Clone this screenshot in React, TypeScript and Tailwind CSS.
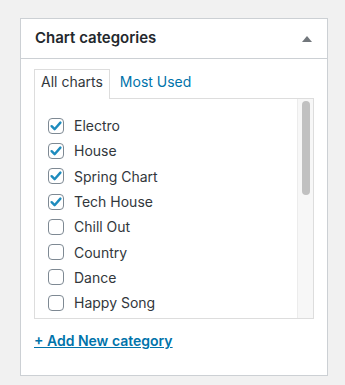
import React from 'react';

const categories = [
  { name: 'Electro', checked: true },
  { name: 'House', checked: true },
  { name: 'Spring Chart', checked: true },
  { name: 'Tech House', checked: true },
  { name: 'Chill Out', checked: false },
  { name: 'Country', checked: false },
  { name: 'Dance', checked: false },
  { name: 'Happy Song', checked: false },
];

function CheckBox({ checked }: { checked: boolean }) {
  return (
    <span className="w-4 h-4 shrink-0 rounded-[4px] border border-[#7e8993] bg-white flex items-center justify-center">
      {checked && (
        <svg width="14" height="14" viewBox="0 0 14 14">
          <path d="M2.6 7.2 L5.6 10.2 L11.4 3.6" fill="none" stroke="#1e8cbe" strokeWidth="2.4" strokeLinecap="round" strokeLinejoin="round" />
        </svg>
      )}
    </span>
  );
}

export default function App() {
  return (
    <div className="min-h-screen bg-[#f1f1f1] pt-[18px] pl-5" style={{ fontFamily: 'Inter, "Noto Sans", sans-serif' }}>
      <div className="w-[308px] h-[358px] border border-[#ccd0d4] bg-white">
        {/* Header */}
        <div className="h-[40px] border-b border-[#ccd0d4] flex items-center justify-between pl-[14px] pr-[15px]">
          <h2 className="text-[15px] font-semibold text-[#23282d]">Chart categories</h2>
          <svg width="10" height="6" viewBox="0 0 10 6">
            <path d="M0 6 L5 0 L10 6 Z" fill="#72777c" />
          </svg>
        </div>

        {/* Body */}
        <div className="pl-[13px] pr-[13px] pt-[10px]">
          <div className="flex items-end h-[29px] text-[14px] leading-[20px]">
            <div className="h-[30px] px-[6px] pt-[2px] border border-b-0 border-[#dddddd] bg-white text-[#32373c] relative top-[1px] z-10">
              All charts
            </div>
            <div className="pl-[10px] h-[29px] pt-[3px] text-[#0073aa]">Most Used</div>
          </div>

          <div className="h-[221px] border border-[#dddddd] bg-white flex overflow-hidden">
            <ul className="flex-1 pt-[14px] pl-[13px] text-[14px] text-[#32373c]">
              {categories.map((c) => (
                <li key={c.name} className="h-[25.3px] flex items-center gap-[10px]">
                  <CheckBox checked={c.checked} />
                  <span>{c.name}</span>
                </li>
              ))}
            </ul>
            <div className="w-[16px] bg-[#f7f7f7] border-l border-[#ececec] pt-[2px] flex justify-center">
              <div className="w-[8px] h-[94px] rounded-full bg-[#c1c1c1]" />
            </div>
          </div>

          <a href="#" className="inline-block mt-[12px] text-[14px] font-semibold text-[#0073aa] underline leading-[20px]">
            + Add New category
          </a>
        </div>
      </div>
    </div>
  );
}
